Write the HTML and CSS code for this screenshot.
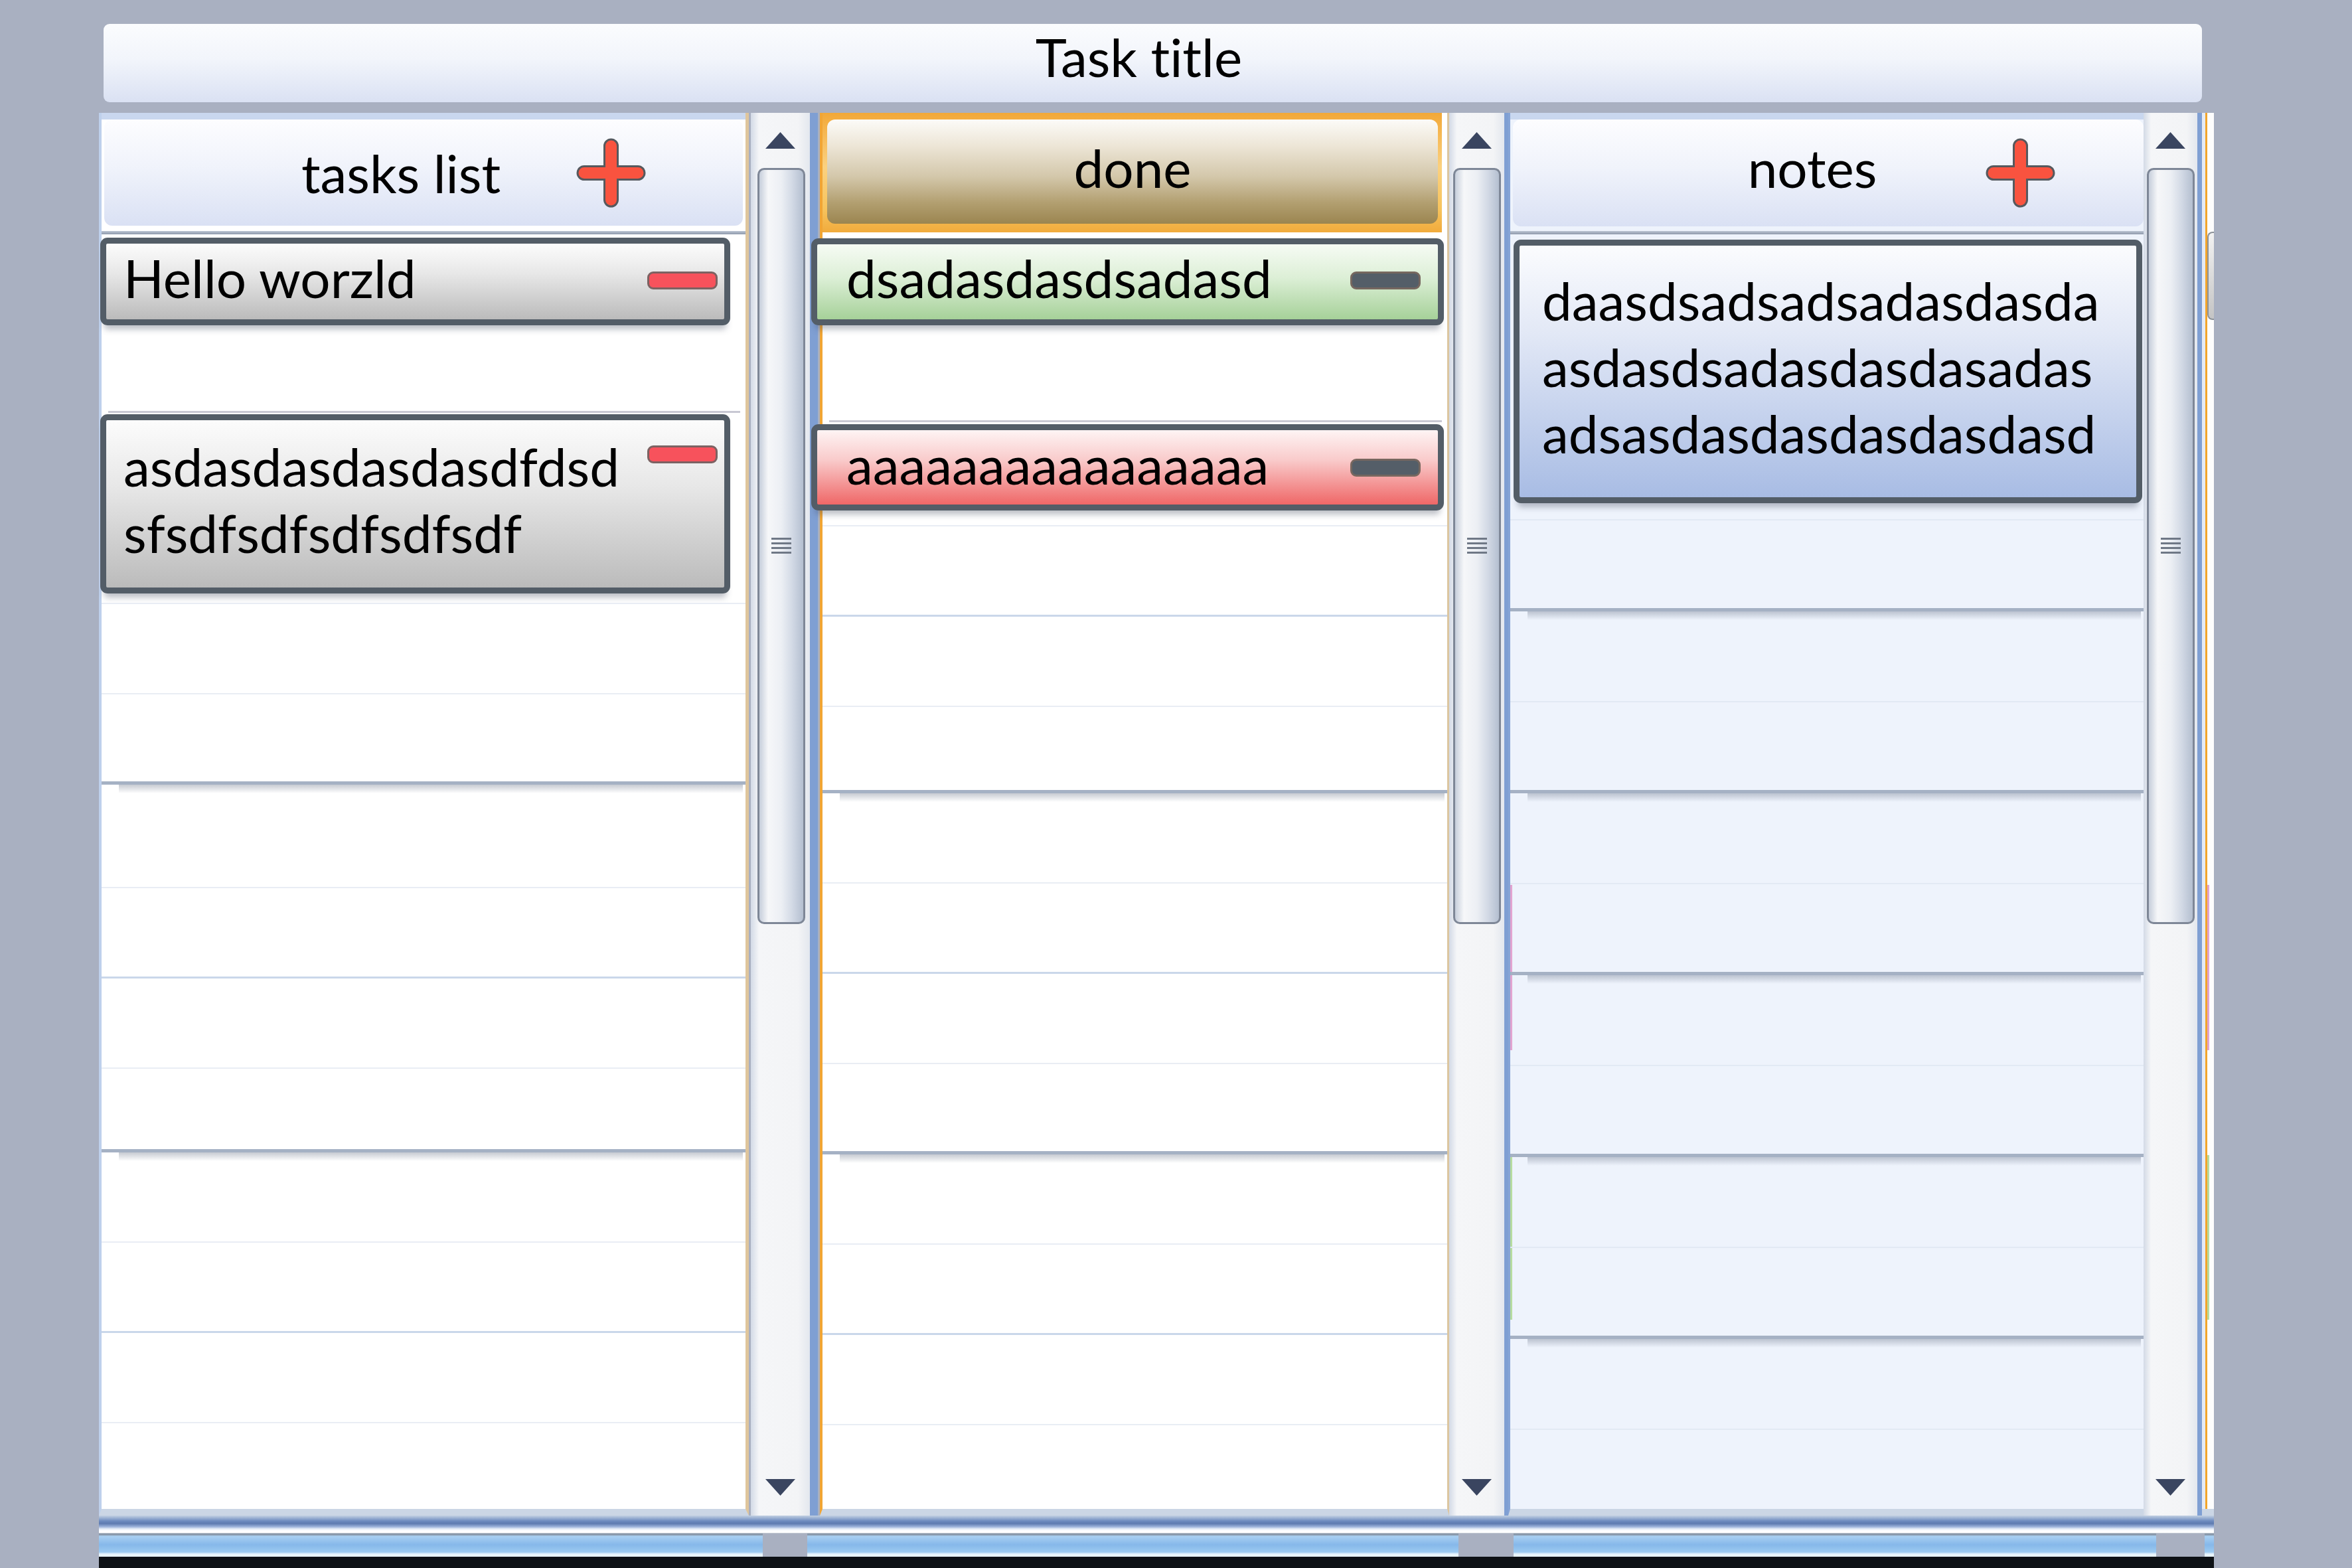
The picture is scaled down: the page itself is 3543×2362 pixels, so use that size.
FILE: index.html
```html
<!DOCTYPE html>
<html lang="en">
<head>
<meta charset="utf-8">
<title>Task board</title>
<link rel="stylesheet" href="styles.css">
</head>
<body>
<div class="page">
  <header class="titlebar"><span>Task title</span></header>
  <div class="board">
    <div class="columns">
      <!-- tasks list -->
      <section class="list list--tasks">
        <div class="colhead colhead--tasks">
          <span class="colhead__title">tasks list</span>
          <svg class="plus" viewBox="0 0 105 105"><path d="M42.5 12 A10 10 0 0 1 62.5 12 V42.5 H93 A10 10 0 0 1 93 62.5 H62.5 V93 A10 10 0 0 1 42.5 93 V62.5 H12 A10 10 0 0 1 12 42.5 H42.5 Z" fill="#f9533f" stroke="#56595e" stroke-width="3"/></svg>
        </div>
        <div class="rule rule--head"></div>
        <div class="card card--grey card--t1">
          <div class="card__text">Hello worzld</div>
          <span class="pill pill--red"></span>
        </div>
        <div class="rule rule--gap rule--gap-t"></div>
        <div class="card card--grey card--t2">
          <div class="card__text">asdasdasdasdasdfdsd<br>sfsdfsdfsdfsdfsdf</div>
          <span class="pill pill--red"></span>
        </div>
        <div class="slot slot--lead"></div>
        <div class="slot"></div>
        <div class="slot slot--heavy"></div>
        <div class="slot slot--long"></div>
        <div class="slot slot--med"></div>
        <div class="slot"></div>
        <div class="slot slot--short slot--heavy"></div>
        <div class="slot"></div>
        <div class="slot slot--med"></div>
        <div class="slot"></div>
        <div class="slot slot--rest"></div>
      </section>
      <div class="sb sb--1">
        <div class="sb__btn"><svg class="arrow" viewBox="0 0 47 27"><path d="M23.5 1 L46 26 H1 Z" fill="#3a4560"/></svg></div>
        <div class="sb__thumb"><span class="grip"></span></div>
        <div class="sb__track"></div>
        <div class="sb__btn sb__btn--down"><svg class="arrow" viewBox="0 0 47 27"><path d="M1 1 H46 L23.5 26 Z" fill="#3a4560"/></svg></div>
      </div>

      <!-- done -->
      <section class="list list--done">
        <div class="donehead"><div class="donehead__inner"><span>done</span></div></div>
        <div class="card card--green card--d1">
          <div class="card__text">dsadasdasdsadasd</div>
          <span class="pill pill--dark"></span>
        </div>
        <div class="rule rule--gap rule--gap-d"></div>
        <div class="card card--red card--d2">
          <div class="card__text">aaaaaaaaaaaaaaaa</div>
          <span class="pill pill--dark"></span>
        </div>
        <div class="slot slot--lead"></div>
        <div class="slot slot--med"></div>
        <div class="slot"></div>
        <div class="slot slot--snug slot--heavy"></div>
        <div class="slot"></div>
        <div class="slot slot--med"></div>
        <div class="slot"></div>
        <div class="slot slot--heavy"></div>
        <div class="slot"></div>
        <div class="slot slot--med"></div>
        <div class="slot"></div>
        <div class="slot slot--rest"></div>
      </section>
      <div class="sb sb--2">
        <div class="sb__btn"><svg class="arrow" viewBox="0 0 47 27"><path d="M23.5 1 L46 26 H1 Z" fill="#3a4560"/></svg></div>
        <div class="sb__thumb"><span class="grip"></span></div>
        <div class="sb__track"></div>
        <div class="sb__btn sb__btn--down"><svg class="arrow" viewBox="0 0 47 27"><path d="M1 1 H46 L23.5 26 Z" fill="#3a4560"/></svg></div>
      </div>

      <!-- notes -->
      <section class="list list--notes">
        <div class="colhead colhead--notes">
          <span class="colhead__title">notes</span>
          <svg class="plus" viewBox="0 0 105 105"><path d="M42.5 12 A10 10 0 0 1 62.5 12 V42.5 H93 A10 10 0 0 1 93 62.5 H62.5 V93 A10 10 0 0 1 42.5 93 V62.5 H12 A10 10 0 0 1 12 42.5 H42.5 Z" fill="#f9533f" stroke="#56595e" stroke-width="3"/></svg>
        </div>
        <div class="rule rule--head rule--head-n"></div>
        <div class="card card--blue card--n">
          <div class="card__text">daasdsadsadsadasdasda<br>asdasdsadasdasdasadas<br>adsasdasdasdasdasdasd</div>
        </div>
        <div class="slot slot--lead"></div>
        <div class="slot slot--heavy"></div>
        <div class="slot"></div>
        <div class="slot slot--heavy"></div>
        <div class="slot"></div>
        <div class="slot slot--heavy"></div>
        <div class="slot"></div>
        <div class="slot slot--heavy"></div>
        <div class="slot"></div>
        <div class="slot slot--heavy"></div>
        <div class="slot"></div>
        <div class="slot slot--rest"></div>
      </section>
      <div class="sb sb--3">
        <div class="sb__btn"><svg class="arrow" viewBox="0 0 47 27"><path d="M23.5 1 L46 26 H1 Z" fill="#3a4560"/></svg></div>
        <div class="sb__thumb"><span class="grip"></span></div>
        <div class="sb__track"></div>
        <div class="sb__btn sb__btn--down"><svg class="arrow" viewBox="0 0 47 27"><path d="M1 1 H46 L23.5 26 Z" fill="#3a4560"/></svg></div>
      </div>

      <!-- next column peeking in -->
      <div class="peek">
        <span class="peek__card"></span>
        <span class="peek__pink"></span>
        <span class="peek__green"></span>
      </div>
    </div>
    <div class="hbar">
      <span class="corner corner--1"></span>
      <span class="corner corner--2"></span>
      <span class="corner corner--3"></span>
    </div>
    <div class="baseline"></div>
  </div>
</div>
</body>
</html>
```

FILE: styles.css
```css
* { box-sizing: border-box; }
html, body { margin: 0; padding: 0; }
body {
  width: 3543px;
  height: 2362px;
  overflow: hidden;
  background: #a9b0c1;
  font-family: Lato, "Open Sans", "DejaVu Sans", sans-serif;
  font-variant-ligatures: none;
  font-feature-settings: "liga" 0, "clig" 0;
  color: #000;
}

.page {
  height: 100%;
  padding: 36px 0 0 149px;
  display: flex;
  flex-direction: column;
}

/* ---------- title ---------- */
.titlebar {
  flex: none;
  margin-left: 7px;
  width: 3161px;
  height: 118px;
  border-radius: 9px;
  background: linear-gradient(#fbfcfe, #f2f5fb 45%, #dae1f3);
  display: flex;
  align-items: center;
  justify-content: center;
  padding: 0 42px 20px 0;
  font-size: 80px;
}

/* ---------- board ---------- */
.board {
  margin-top: 16px;
  width: 3186px;
  flex: 1;
  display: flex;
  flex-direction: column;
}
.columns {
  flex: none;
  height: 2113px;
  display: flex;
}

.list {
  flex: none;
  height: 100%;
  display: flex;
  flex-direction: column;
  border-bottom: 10px solid #cbd6e5;
}
.list--tasks {
  width: 979px;
  padding-top: 10px;
  border-left: 4px solid #bed0ec;
  border-right: 5px solid #dfc59c;
  background: linear-gradient(#c9d7ef 0 10px, #ffffff 10px);
}
.list--done {
  width: 948px;
  background: #ffffff;
  border-left: 4px solid #f1a534;
  border-right: 3px solid #dcc6a0;
}
.list--notes {
  width: 957px;
  padding-top: 10px;
  border-left: 3px solid #86a4d6;
  background-color: #eef3fc;
  background-image:
    linear-gradient(#c9d7ef, #c9d7ef),
    linear-gradient(#e2a4d0, #e2a4d0),
    linear-gradient(#b6dca0, #b6dca0);
  background-size: 100% 10px, 3px 249px, 3px 248px;
  background-position: 0 0, 0 1163px, 0 1570px;
  background-repeat: no-repeat;
}

/* ---------- column headers ---------- */
.colhead {
  flex: none;
  height: 160px;
  margin: 0 4px;
  border-radius: 12px;
  background: linear-gradient(#fdfdff, #f0f3fb 45%, #dae1f4);
  display: grid;
  grid-template-columns: 1fr auto 1fr;
  align-items: center;
  font-size: 80px;
}
.colhead__title { grid-column: 2; }
.plus {
  grid-column: 3;
  justify-self: end;
  width: 105px;
  height: 105px;
  display: block;
}
.colhead--tasks { padding-right: 68px; }
.colhead--tasks .plus { margin-right: 78px; }
.colhead--notes { height: 161px; margin: 0 0 0 4px; padding-right: 48px; }
.colhead--notes .plus { margin-right: 85px; }
.colhead--notes .colhead__title { margin-bottom: 18px; }

.donehead {
  flex: none;
  height: 180px;
  margin-right: 8px;
  padding: 10px 6px 13px 7px;
  background: linear-gradient(#f2a838, #fbd17f 45%, #f7c45e 80%, #f1ab3c);
}
.donehead__inner {
  height: 100%;
  border-radius: 12px;
  background: linear-gradient(#fcfbf8 0%, #ede6d7 25%, #d3c7aa 55%, #b29f70 80%, #9b8550 100%);
  display: flex;
  align-items: center;
  justify-content: center;
  font-size: 80px;
}
.donehead__inner span { margin-bottom: 13px; }

/* ---------- rules & slots ---------- */
.rule { flex: none; }
.rule--head {
  margin-top: 8px;
  height: 5px;
  background: linear-gradient(#bcc5d3, #8e99ab);
}
.rule--head-n { margin-top: 7px; }
.rule--gap {
  height: 3px;
  margin: 0 8px 0 10px;
  background: #c8c8d3;
}
.rule--gap-t { margin-top: 129px; }
.rule--gap-d { margin-top: 143px; }

.slot {
  flex: none;
  position: relative;
  height: 136px;
  border-bottom: 2px solid #e9edf4;
}
.list--notes .slot { height: 137px; }
.list--notes .slot:not(.slot--heavy) { border-bottom-color: #e2e9f4; }
.slot--med { border-bottom: 3px solid #cad7ea; }
.slot--heavy { border-bottom: 5px solid #a5b1c4; }
.slot--heavy::after {
  content: "";
  position: absolute;
  left: 26px;
  right: 4px;
  top: 100%;
  margin-top: 5px;
  height: 13px;
  background: linear-gradient(rgba(80, 92, 115, 0.32), rgba(80, 92, 115, 0));
}
.slot--long { height: 156px; }
.slot--short { height: 126px; }
.slot--snug { height: 130px; }
.list--tasks .slot--lead { height: 16px; }
.list--done .slot--lead { height: 24px; }
.list--notes .slot--lead { height: 26px; }
.list .slot--rest { flex: 1; height: auto; border-bottom: 0; }

/* ---------- cards ---------- */
.card {
  flex: none;
  display: flex;
  align-items: flex-start;
  border: 9px solid #535d67;
  border-radius: 11px;
  box-shadow: 0 12px 10px -6px rgba(60, 70, 90, 0.35);
  font-size: 80px;
  line-height: 100px;
  position: relative;
}
.card__text { flex: 1; white-space: nowrap; }
.card--grey  { background: linear-gradient(#fcfcfc, #e7e7e7 40%, #bbbbbb); }
.card--green { background: linear-gradient(#f6fbf4, #dcefd6 45%, #a6d199); }
.card--red   { background: linear-gradient(#fef4f4, #f9cbcb 40%, #ef6767); }
.card--blue  { background: linear-gradient(#fbfcfe, #e2e8f6 35%, #a8bce4); }

.card--t1 { height: 132px; margin: 5px 23px 0 -2px; }
.card--t1 .card__text { padding: 1px 0 0 26px; }
.card--t1 .pill { margin-top: 42px; }
.card--t2 { height: 270px; margin: 2px 23px 0 -2px; }
.card--t2 .card__text { padding: 19px 0 0 26px; }
.card--t2 .pill { margin-top: 38px; }
.card--t1 .pill, .card--t2 .pill { margin-right: 10px; }

.card--d1 { height: 131px; margin: 9px 5px 0 -17px; }
.card--d1 .card__text { padding: 0 0 0 44px; }
.card--d1 .pill { margin-top: 41px; }
.card--d2 { height: 130px; margin: 3px 5px 0 -17px; }
.card--d2 .card__text { padding: 1px 0 0 44px; }
.card--d2 .pill { margin-top: 43px; }
.card--d1 .pill, .card--d2 .pill { margin-right: 26px; }

.card--n { height: 397px; margin: 8px 2px 0 5px; }
.card--n .card__text { padding: 32px 0 0 34px; }

.pill {
  flex: none;
  width: 106px;
  height: 27px;
  border-radius: 9px;
  border: 3px solid #7c6262;
}
.pill--red { background: #f7525c; }
.pill--dark { background: #545e68; border-color: #76675f; }

/* ---------- scrollbars ---------- */
.sb {
  flex: none;
  height: 100%;
  display: flex;
  flex-direction: column;
  background: linear-gradient(to right, #d3dae6, #f5f6f8 14%, #f3f4f6 80%, #e3e7ee);
  border-right: 6px solid #7f9fd3;
}
.sb--1 { width: 101px; margin: 0 3px; border-right-width: 12px; }
.sb--2 { width: 89px; }
.sb--3 { width: 88px; border-right-width: 7px; }
.sb__btn {
  flex: none;
  height: 83px;
  display: flex;
  align-items: center;
  justify-content: center;
}
.sb__btn--down { height: 86px; }
.arrow { width: 47px; height: 27px; display: block; }
.sb__thumb {
  flex: none;
  height: 1139px;
  width: 72px;
  margin: 0 auto;
  border: 3px solid #7e8797;
  border-radius: 10px;
  background: linear-gradient(to right, #c6cedb, #f6f7f9 20%, #eceff4 50%, #d2d9e5 75%, #b4bfd0);
  display: flex;
  align-items: center;
  justify-content: center;
}
.sb--1 .sb__thumb { margin-left: 10px; }
.grip {
  width: 30px;
  height: 25px;
  background: repeating-linear-gradient(#6f7886 0 3px, transparent 3px 7px);
}
.sb__track { flex: 1; }

/* ---------- next column sliver ---------- */
.peek {
  flex: none;
  width: 18px;
  height: 100%;
  display: flex;
  flex-direction: column;
  align-items: flex-start;
  padding-left: 8px;
  background: linear-gradient(to right, #e4eaf4 0 5px, #f2a52c 5px 8px, #fdfdfd 8px);
  border-bottom: 10px solid #cbd6e5;
}
.peek__card {
  margin-top: 179px;
  width: 10px;
  height: 133px;
  border-radius: 8px 0 0 8px;
  border: 2px solid #8c9299;
  border-right: 0;
  background: linear-gradient(#f2f2f2, #c4c4c4);
}
.peek__pink {
  margin-top: 851px;
  width: 3px;
  height: 249px;
  background: #e2a4d0;
}
.peek__green {
  margin-top: 158px;
  width: 3px;
  height: 248px;
  background: #b6dca0;
}

/* ---------- bottom bars ---------- */
.hbar {
  flex: none;
  height: 62px;
  display: flex;
  align-items: flex-start;
  background: linear-gradient(
    #c2d0e2 0,
    #6f8cc0 8px,
    #5d7ab0 12px,
    #9fb5dc 17px,
    #e4ecf7 20px,
    #ffffff 23px,
    #ffffff 26px,
    #8796a8 27px,
    #8796a8 29px,
    #a9d0f2 31px,
    #86b8ea 44px,
    #9ccaf0 55px,
    #e8f4fc 58px,
    #e8f4fc 62px);
}
.corner {
  flex: none;
  margin-top: 27px;
  height: 35px;
  background: #a9b0c1;
}
.corner--1 { margin-left: 1000px; width: 67px; }
.corner--2 { margin-left: 981px; width: 83px; }
.corner--3 { margin-left: 968px; width: 73px; }
.baseline {
  flex: none;
  height: 17px;
  background: #0e1216;
}
```
